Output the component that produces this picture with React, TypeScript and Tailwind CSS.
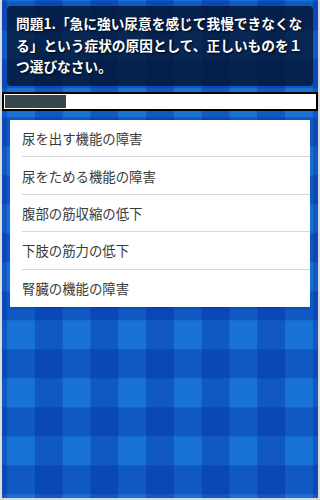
import React from 'react';

const choices = [
    '尿を出す機能の障害',
    '尿をためる機能の障害',
    '腹部の筋収縮の低下',
    '下肢の筋力の低下',
    '腎臓の機能の障害',
];

const App: React.FC = () => {
    return (
        <div className="h-[500px] w-[320px] bg-[#dcdcdc] px-[2px] pb-[2px] font-['Noto_Sans_CJK_JP',sans-serif]">
            {/* plaid panel */}
            <div className="h-full flex flex-col bg-[#1873d5] bg-[linear-gradient(90deg,transparent_50%,rgba(0,40,160,0.35)_50%),linear-gradient(180deg,transparent_50%,rgba(0,40,160,0.35)_50%)] bg-[length:55.6px_58px] bg-[position:5.1px_30.3px]">
                {/* question */}
                <div className="mx-[5px] mt-[6px] rounded-[4px] bg-[rgba(5,22,52,0.82)] pl-[9px] pr-[5px] py-[7px] h-[80px]">
                    <p className="text-white font-bold text-[13.7px] leading-[21.5px] [text-shadow:1px_1px_2px_rgba(0,0,0,0.8)]">
                        問題1.「急に強い尿意を感じて我慢できなくなる」という症状の原因として、正しいものを１つ選びなさい。
                    </p>
                </div>

                {/* progress */}
                <div className="mt-[6px] h-[19px] border-2 border-black bg-white p-[1px]">
                    <div className="h-full w-[61px] bg-[#37474f]" />
                </div>

                {/* choices */}
                <div className="mx-[8px] mt-[9px] bg-white shadow-[0_1px_2px_rgba(0,0,0,0.2)]">
                    {choices.map((c, i) => (
                        <div key={i} className="ml-[12px] h-[37.4px] flex items-center border-b border-[#d8d8d8] last:border-b-0">
                            <span className="text-[13.4px] text-[#3a3a3a]">{c}</span>
                        </div>
                    ))}
                </div>
            </div>
        </div>
    );
};

export default App;
